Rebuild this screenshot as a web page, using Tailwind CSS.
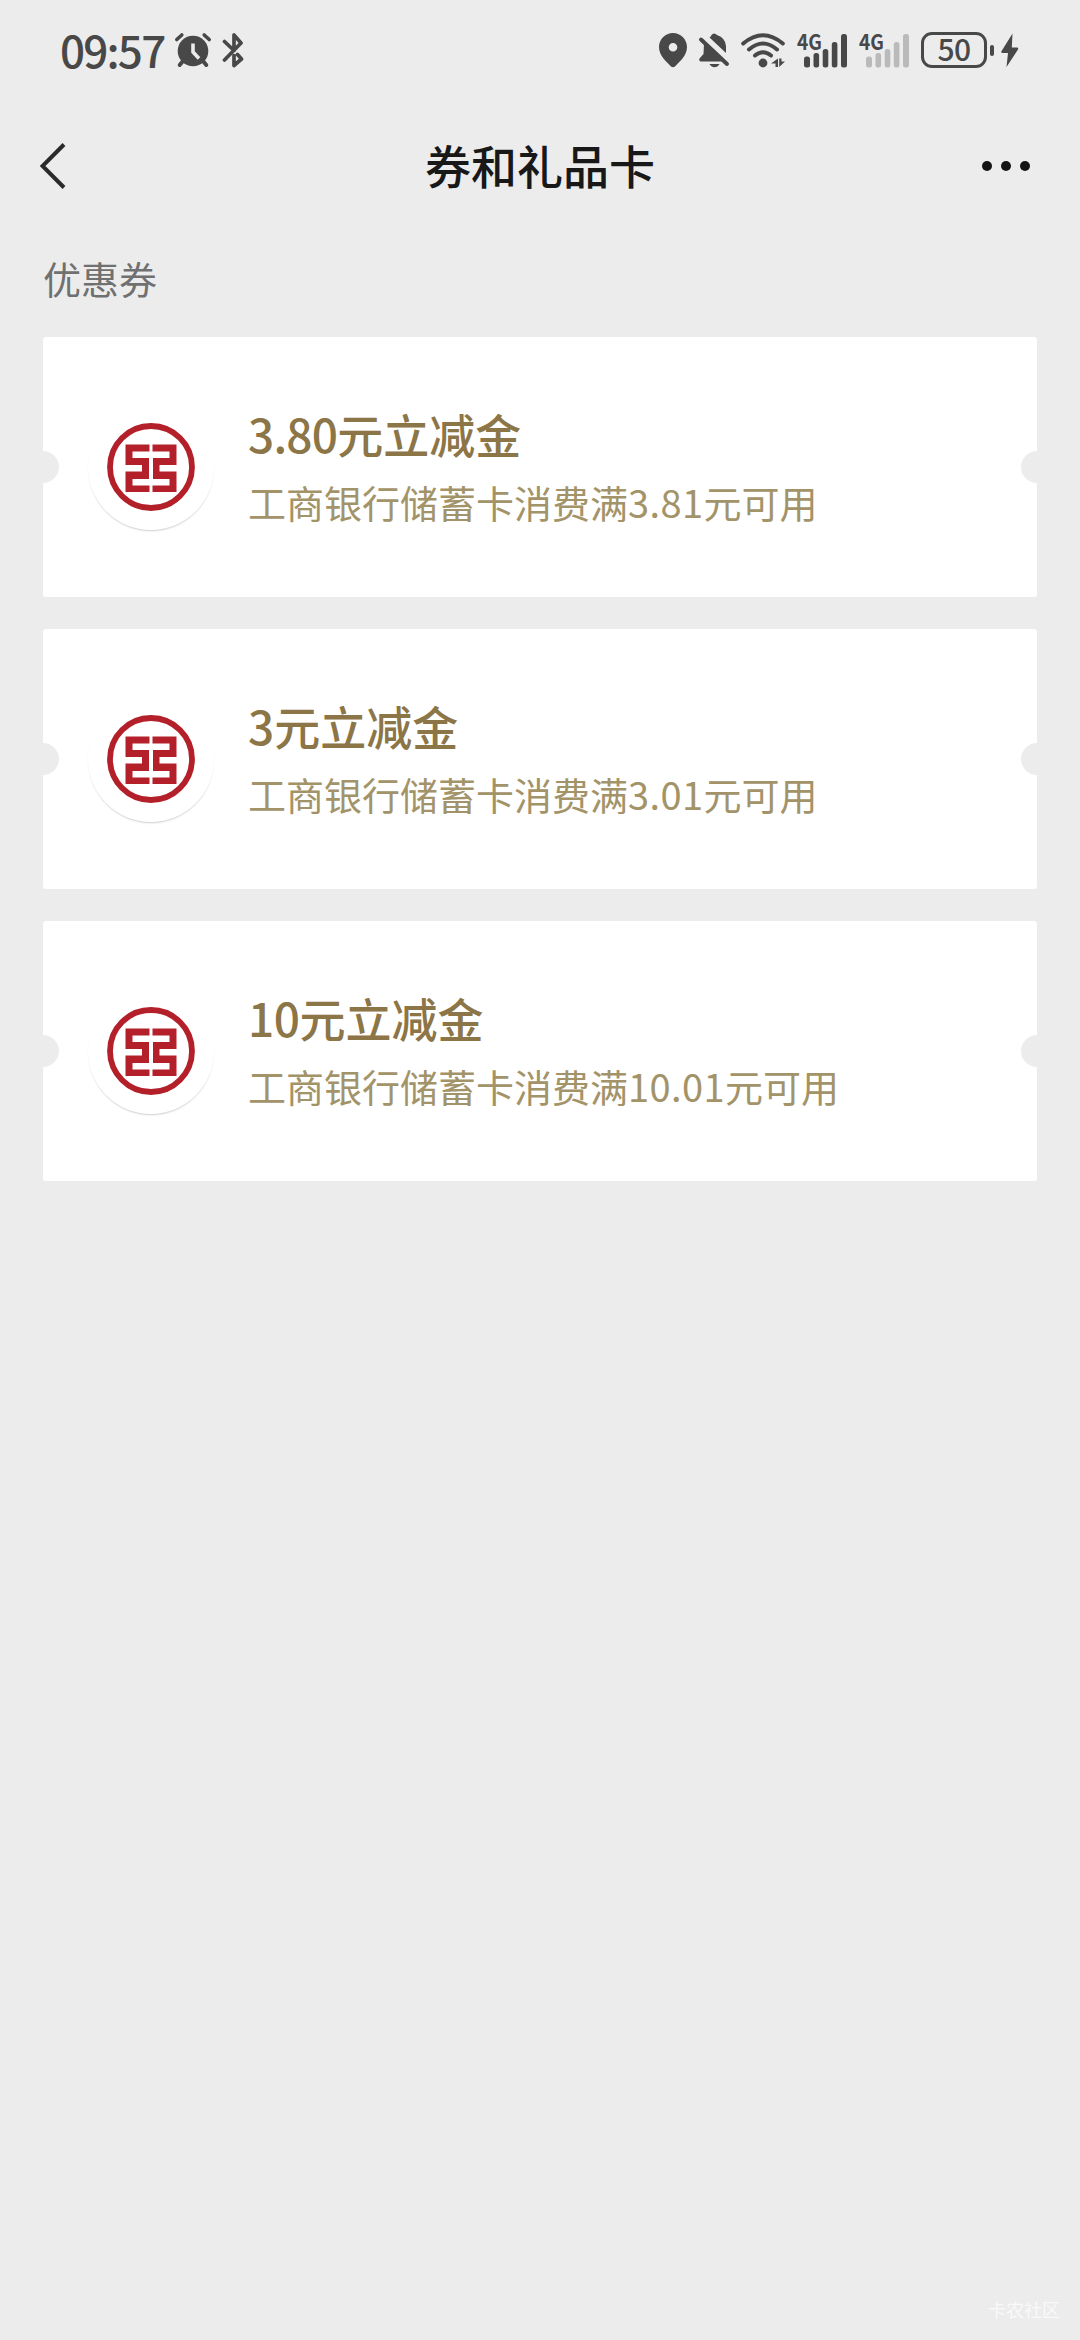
<!DOCTYPE html>
<html lang="zh-CN">
<head>
<meta charset="utf-8">
<title>券和礼品卡</title>
<script src="https://cdn.jsdelivr.net/npm/@tailwindcss/browser@4"></script>
</head>
<body class="bg-[#ececec]">
<svg class="hidden">
  <symbol id="bank" viewBox="0 0 88 88">
    <circle cx="44" cy="44" r="41" fill="none" stroke="#b3202a" stroke-width="5.8"/>
    <g fill="#b3202a">
      <path d="M18.5 21.5H42.5V28.5H25.5V35H42V56H25.5V62.5H42.5V69H18.5V48.5H35V42H18.5Z"/>
      <path d="M45.5 21.5H69.5V42H52.5V48.5H69.5V69H45.5V62.5H62.5V56H46V35H62.5V28.5H45.5Z"/>
    </g>
  </symbol>
</svg>
<main class="relative flex h-[2340px] w-[1080px] flex-col overflow-hidden bg-[#ececec] font-['Noto_Sans_CJK_SC',sans-serif]">
  <header class="flex h-[100px] items-center justify-between pl-[60px] pr-[61px] text-[#484848]">
    <div class="flex items-center">
      <span class="w-[114px] whitespace-nowrap pb-[2px] text-[44px] font-medium leading-[98px] tracking-[-1.8px]">09:57</span>
      <svg class="h-[36px] w-[38px]" viewBox="174 32 38 36" fill="none" stroke="currentColor" stroke-linecap="round">
        <circle cx="193" cy="51" r="15.3" fill="currentColor" stroke="none"/>
        <path d="M176.8 39.5l5-4.5M209.200 39.500l-5-4.500" stroke-width="3.6"/>
        <path d="M183 61l-3.300 4M203 61l3.300 4" stroke-width="4"/>
        <path d="M193 43.500V52L199 58.500" stroke="#ececec" stroke-width="3.600" stroke-linecap="butt"/>
      </svg>
      <svg class="ml-[9px] h-[36px] w-[24px]" viewBox="222 32 24 36" fill="none" stroke="currentColor" stroke-width="3.700" stroke-linecap="round" stroke-linejoin="round">
        <path d="M225.500 41.500L235 50.500M225.500 60L242 43L235 35V50.500M238.500 54.500L242.500 59L235 65.500V55.500"/>
      </svg>
    </div>
    <div class="flex items-center">
      <svg class="h-[36px] w-[30px]" viewBox="658 32 30 36"><path fill="currentColor" fill-rule="evenodd" d="M673 33C665 33 659 39.500 659 47C659 56 667 62 671 66.500Q673 68 675 66.500C679 62 687 56 687 47C687 39.500 681 33 673 33ZM673 43a4.300 4.300 0 1 1 0 8.600a4.300 4.300 0 1 1 0-8.600Z"/></svg>
      <svg class="ml-[10px] h-[36px] w-[32px]" viewBox="698 32 32 36" fill="currentColor">
        <path d="M704 43.500L722 61.500H701Q698.500 61 699.500 58.500L703.500 54Z"/>
        <path d="M709.500 37.500Q711 36.500 711.500 35Q714 32 717 35Q725.500 38 726 46V53Z"/>
        <path d="M709.500 64H719.500Q717.500 67.300 714.500 67.300T709.500 64Z"/>
        <path d="M701 39.500L727 64" fill="none" stroke="currentColor" stroke-width="4" stroke-linecap="round"/>
      </svg>
      <svg class="ml-[10px] h-[36px] w-[46px]" viewBox="740 32 46 36" fill="none" stroke="currentColor" stroke-width="4" stroke-linecap="round">
        <path d="M743.200 43.500Q763 27 782.800 43.500M749 49.500Q763 37.500 777 49.500M755 55.500Q763 49 771 55.500"/>
        <circle cx="763" cy="63" r="4.400" fill="currentColor" stroke="none"/>
        <path d="M771 63.500L778 58.500V67H775.500V63.500ZM779.200 58.500H781.500V61.500H785L779.200 67Z" fill="currentColor" stroke="none"/>
      </svg>
      <svg class="ml-[10px] h-[60px] w-[52px]" viewBox="796 20 52 60" fill="currentColor">
        <text x="797" y="50" font-family="Noto Sans CJK SC" font-size="21.500" font-weight="700" textLength="25" lengthAdjust="spacingAndGlyphs">4G</text>
        <rect x="804" y="56.500" width="6" height="11" rx="2.500"/><rect x="813.500" y="53" width="5.600" height="14.500" rx="2.500"/><rect x="822.700" y="49" width="5.600" height="18.500" rx="2.500"/><rect x="831.800" y="42" width="5.600" height="25.500" rx="2.500"/><rect x="841" y="34" width="6" height="33.500" rx="2.500"/>
      </svg>
      <svg class="ml-[10px] h-[60px] w-[52px]" viewBox="858 20 52 60" fill="#bababa">
        <rect x="866" y="56.500" width="6" height="11" rx="2.500"/><rect x="875.500" y="53" width="5.600" height="14.500" rx="2.500"/><rect x="884.700" y="49" width="5.600" height="18.500" rx="2.500"/><rect x="893.800" y="42" width="5.600" height="25.500" rx="2.500"/><rect x="903" y="34" width="6" height="33.500" rx="2.500"/>
        <text x="859" y="50" fill="#484848" font-family="Noto Sans CJK SC" font-size="21.500" font-weight="700" textLength="25" lengthAdjust="spacingAndGlyphs">4G</text>
      </svg>
      <div class="ml-[11px] flex h-[36px] w-[66px] items-center justify-center rounded-[11px] border-[3px] border-[#484848] text-[30px] font-medium leading-none tracking-[-0.5px]"><span class="-mt-[4px]">50</span></div>
      <div class="ml-[3px] h-[11px] w-[4px] rounded-[2px] bg-[#484848]"></div>
      <svg class="ml-[7px] h-[36px] w-[18px]" viewBox="1001 32 18 36"><path fill="currentColor" d="M1012.500 33.500L1001.300 51.500Q1001 53 1002.500 53H1008L1006.500 67L1018 49.500Q1018.700 47.500 1017 47.500H1011.800Z"/></svg>
    </div>
  </header>

  <nav class="flex h-[132px] items-center justify-between pl-[40px] pr-[50px]">
    <svg class="h-[48px] w-[80px]" viewBox="40 142 80 48" fill="none" stroke="#2a2a2a" stroke-width="4"><path d="M64 144.500L42.500 166L64 187.500"/></svg>
    <h1 class="pb-[5px] text-[46px] font-medium leading-[60px] text-[#181818]">券和礼品卡</h1>
    <div class="flex w-[70px] justify-end gap-[9px]">
      <i class="size-[10px] rounded-full bg-[#141414]"></i><i class="size-[10px] rounded-full bg-[#141414]"></i><i class="size-[10px] rounded-full bg-[#141414]"></i>
    </div>
  </nav>

  <h2 class="h-[105px] pl-[43px] text-[38px] leading-[91px] text-[#707070]">优惠券</h2>

  <section class="flex flex-col gap-8 px-[43px]">
    <article class="relative flex h-[260px] items-center overflow-hidden rounded-[3px] bg-white pl-[45px]">
      <div class="flex size-[126px] items-center justify-center rounded-full bg-white shadow-[0_2px_2px_-1px_rgba(0,0,0,0.2)]"><svg class="size-[88px]"><use href="#bank"/></svg></div>
      <div class="ml-[34px] whitespace-nowrap">
        <p class="text-[46px] font-medium leading-[68px] text-[#8c7547]"><span class="tracking-[-0.8px]">3.80</span>元立减金</p>
        <p class="pt-px text-[38px] leading-[67px] text-[#a39369]">工商银行储蓄卡消费满<span class="tracking-[0.4px]">3.81</span>元可用</p>
      </div>
      <i class="absolute -left-4 top-[114px] size-8 rounded-full bg-[#ececec]"></i>
      <i class="absolute -right-4 top-[114px] size-8 rounded-full bg-[#ececec]"></i>
    </article>
    <article class="relative flex h-[260px] items-center overflow-hidden rounded-[3px] bg-white pl-[45px]">
      <div class="flex size-[126px] items-center justify-center rounded-full bg-white shadow-[0_2px_2px_-1px_rgba(0,0,0,0.2)]"><svg class="size-[88px]"><use href="#bank"/></svg></div>
      <div class="ml-[34px] whitespace-nowrap">
        <p class="text-[46px] font-medium leading-[68px] text-[#8c7547]">3元立减金</p>
        <p class="pt-px text-[38px] leading-[67px] text-[#a39369]">工商银行储蓄卡消费满<span class="tracking-[0.4px]">3.01</span>元可用</p>
      </div>
      <i class="absolute -left-4 top-[114px] size-8 rounded-full bg-[#ececec]"></i>
      <i class="absolute -right-4 top-[114px] size-8 rounded-full bg-[#ececec]"></i>
    </article>
    <article class="relative flex h-[260px] items-center overflow-hidden rounded-[3px] bg-white pl-[45px]">
      <div class="flex size-[126px] items-center justify-center rounded-full bg-white shadow-[0_2px_2px_-1px_rgba(0,0,0,0.2)]"><svg class="size-[88px]"><use href="#bank"/></svg></div>
      <div class="ml-[34px] whitespace-nowrap">
        <p class="text-[46px] font-medium leading-[68px] text-[#8c7547]"><span class="tracking-[-0.5px]">10</span>元立减金</p>
        <p class="pt-px text-[38px] leading-[67px] text-[#a39369]">工商银行储蓄卡消费满<span class="tracking-[0.4px]">10.01</span>元可用</p>
      </div>
      <i class="absolute -left-4 top-[114px] size-8 rounded-full bg-[#ececec]"></i>
      <i class="absolute -right-4 top-[114px] size-8 rounded-full bg-[#ececec]"></i>
    </article>
  </section>

  <footer class="mt-auto flex justify-end pb-[17px] pr-[20px] text-[18px] leading-[28px] text-[#f9f9f9]">卡农社区</footer>
</main>
</body>
</html>
